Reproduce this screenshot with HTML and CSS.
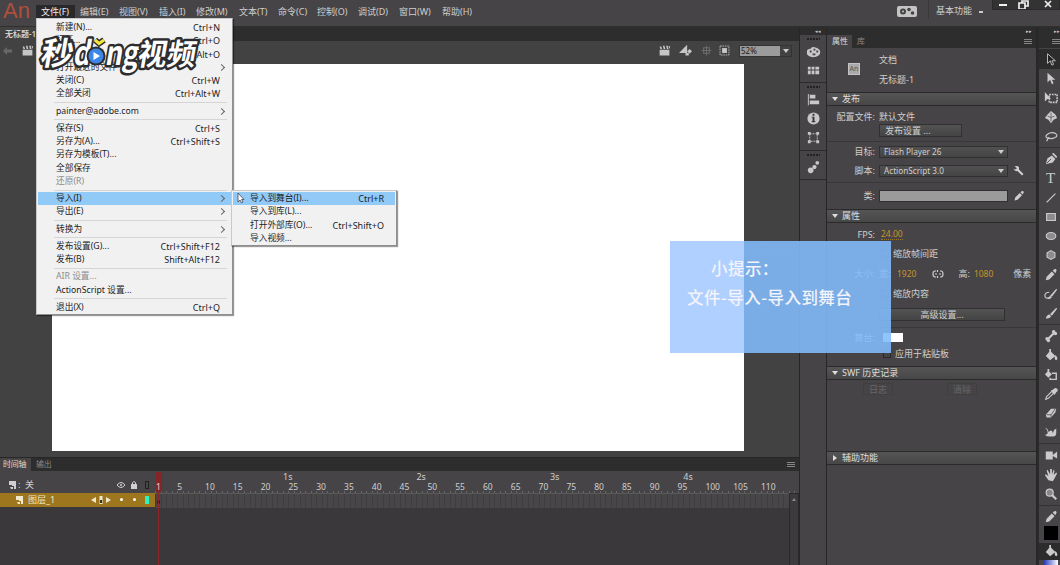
FILE: index.html
```html
<!DOCTYPE html>
<html lang="zh-CN">
<head>
    <meta charset="UTF-8">
    <meta name="viewport" content="width=device-width, initial-scale=1.0">
    <title>无标题-1</title>
    <link rel="stylesheet" href="styles.css">
</head>
<body>
    <svg class="sprite" aria-hidden="true">
        <symbol id="i-clap" viewBox="0 0 16 16"><path d="M2 7h12v7H2zM2 3l2 0 1 3H3zM6 2h2l1 4H7zM10 2h2l1 4h-2zM13 2l2 1-1 3z"/></symbol>
        <symbol id="i-menu" viewBox="0 0 8 6"><path d="M0 0h8v1H0zM0 2h8v1H0zM0 4h8v1H0z"/></symbol>
        <symbol id="i-layer" viewBox="0 0 10 10"><path d="M1 1h7v8H6V6H4V5H1zM2 7h3v2H3z"/></symbol>
        <symbol id="i-pencil" viewBox="0 0 16 16"><path d="M2 14l1-4 6-6 3 3-6 6zM10 3l1.500-1.500q2-1 3 1L13 6z"/></symbol>
        <symbol id="i-bucket" viewBox="0 0 16 16"><path d="M2 9l5-6 6 6-6 5zM6 1h2v6H6zM13 8q4 4 1 6-3-1-1-6z"/></symbol>
        <symbol id="i-dropper" viewBox="0 0 16 16"><path d="M2 14l1-3 6-6 2 2-6 6z" fill="none" stroke="currentColor" stroke-width="1.300"/><path d="M8 4l2-1q3-3 5-1t-1 4l-2 3z"/></symbol>
    </svg>

    <header class="app-bar">
        <div class="brand">An</div>
        <nav class="menu-bar">
            <span class="active">文件(F)</span><span>编辑(E)</span><span>视图(V)</span><span>插入(I)</span><span>修改(M)</span><span>文本(T)</span><span>命令(C)</span><span>控制(O)</span><span>调试(D)</span><span>窗口(W)</span><span>帮助(H)</span>
        </nav>
        <div class="app-right">
            <svg class="sync" viewBox="0 0 20 11"><rect width="20" height="11" rx="2" fill="#c4c4c4"/><g fill="#444"><circle cx="6" cy="5.500" r="3"/><circle cx="12" cy="3.500" r="1.800"/><circle cx="15.500" cy="7" r="1.800"/></g><circle cx="6" cy="5.500" r="1" fill="#c4c4c4"/></svg>
            <div class="workspace-name">基本功能 <i></i></div>
            <div class="window-buttons">
                <svg viewBox="0 0 20 10"><path d="M6 4h8v2H6z"/></svg>
                <svg viewBox="0 0 20 10"><path d="M6 3h6v6H6zM9 3V1h6v5h-3" fill="none" stroke="currentColor" stroke-width="1.700"/></svg>
                <svg class="close" viewBox="0 0 30 10"><path d="M12 1l6 6M18 1l-6 6" fill="none" stroke="currentColor" stroke-width="1.700"/></svg>
            </div>
        </div>
    </header>

    <main class="workspace">
        <section class="document">
            <div class="doc-tabs"><span>无标题-1</span></div>
            <div class="edit-bar">
                <svg class="back" viewBox="0 0 10 8"><path d="M0 4l4-4v2.500h5v3H4V8z"/></svg>
                <svg class="icon scene" ><use href="#i-clap"/></svg>
                <div class="edit-tools">
                    <svg class="icon"><use href="#i-clap"/></svg>
                    <svg class="icon" viewBox="0 0 16 16"><path d="M0 11l10-10v10zM10 9l3-3 3 3-3 3zM8 11h4v3H8z"/></svg>
                    <svg class="icon dim" viewBox="0 0 16 16"><path d="M8 2v12M2 8h12M4.500 4.500h7v7h-7z" fill="none" stroke="currentColor" stroke-width="1.300"/></svg>
                    <svg class="icon" viewBox="0 0 16 16"><path d="M2.500 2.500h11v11h-11z" fill="none" stroke="currentColor" stroke-dasharray="2 1"/><path d="M5 5h6v6H5z"/></svg>
                    <div class="zoom"><span>52%</span><i class="caret"></i></div>
                </div>
            </div>
            <div class="pasteboard"><div class="canvas"></div></div>

            <div class="timeline">
                <div class="tab-strip"><span class="active">时间轴</span><span>输出</span><svg class="panel-menu"><use href="#i-menu"/></svg></div>
                <div class="timeline-body">
                    <div class="layers">
                        <div class="layers-head">
                            <svg class="layer-icon"><use href="#i-layer"/></svg><span class="off">:  关</span>
                            <svg class="eye" viewBox="0 0 10 8"><path d="M1 4q4-5 8 0-4 5-8 0z" fill="none" stroke="currentColor"/><circle cx="5" cy="4" r="1"/></svg>
                            <svg class="lock" viewBox="0 0 8 10"><path d="M1 4h6v5H1z"/><path d="M2.500 4V2.500q1.500-2 3 0V4" fill="none" stroke="currentColor"/></svg>
                            <i class="outline-box"></i>
                        </div>
                        <div class="layer">
                            <svg class="layer-icon"><use href="#i-layer"/></svg><span class="layer-name">图层_1</span>
                            <svg class="key-nav" viewBox="0 0 22 8"><path d="M6 1v6L1 4zM16 1v6l5-3zM9.500 0h3v8h-3z"/><path d="M10 4h2v3h-2z" fill="#332"/></svg>
                            <i class="dot"></i><i class="dot"></i><i class="swatch"></i>
                        </div>
                    </div>
                    <div class="frames">
                        <div class="seconds"><span>1s</span><span>2s</span><span>3s</span><span>4s</span></div>
                        <div class="ruler">
                            <span class="first">1</span><span>5</span><span>10</span><span>15</span><span>20</span><span>25</span><span>30</span><span>35</span><span>40</span><span>45</span><span>50</span><span>55</span><span>60</span><span>65</span><span>70</span><span>75</span><span>80</span><span>85</span><span>90</span><span>95</span><span>100</span><span>105</span><span>110</span>
                        </div>
                        <div class="frame-row"><i></i></div>
                        <div class="playhead"></div>
                        <div class="scrollbar"><i></i></div>
                    </div>
                </div>
            </div>
        </section>

        <aside class="dock">
            <div class="dock-top">◂◂</div>
            <div class="dock-group">
                <i class="grip"></i>
                <svg viewBox="0 0 16 16"><path fill-rule="evenodd" d="M1 8q0-3 4-3 1-3 6-1 5 2 4 6-2 4-8 4-7-1-6-6zM4 7v2h2V7zM8 5v2h2V5zM11 7v2h2V7zM7 10v2h3v-2z"/></svg>
                <svg viewBox="0 0 16 16"><path d="M2 4h3v3H2zM6 4h3v3H6zM10 4h4v3h-4zM2 8h3v4H2zM6 8h3v4H6zM10 8h4v4h-4z"/></svg>
            </div>
            <div class="dock-group">
                <i class="grip"></i>
                <svg viewBox="0 0 16 16"><path d="M2 2h1v12H2zM4 3h6v4H4zM4 9h10v4H4z"/></svg>
                <svg viewBox="0 0 16 16"><circle cx="8" cy="8" r="6.500"/><path d="M7 3h2v2H7zM6 6h3v5h1v1H6v-1h1V7H6z" fill="#333"/></svg>
                <svg viewBox="0 0 16 16"><path d="M4 4h8v8H4z" fill="none" stroke="currentColor" stroke-dasharray="2 1"/><path d="M2 2h3v3H2zM11 2h3v3h-3zM2 11h3v3H2zM11 11h3v3h-3z"/></svg>
            </div>
            <div class="dock-group last">
                <i class="grip"></i>
                <svg viewBox="0 0 16 16"><circle cx="5" cy="11" r="3"/><circle cx="9" cy="7.500" r="2.300"/><circle cx="12" cy="3" r="2"/></svg>
            </div>
        </aside>

        <aside class="properties">
            <div class="panel-top">▸▸</div>
            <div class="tab-strip"><span class="active">属性</span><span>库</span><svg class="panel-menu"><use href="#i-menu"/></svg></div>
            <div class="doc-info">
                <div class="doc-badge">An</div>
                <div class="doc-title"><div>文档</div><div>无标题-1</div></div>
            </div>
            <h2>发布</h2>
            <div class="publish">
                <div class="row profile"><label>配置文件:</label><span>默认文件</span></div>
                <div class="row profile-button"><button>发布设置 ...</button></div>
                <div class="row target"><label>目标:</label><div class="select">Flash Player 26<i class="caret"></i></div></div>
                <div class="row script"><label>脚本:</label><div class="select">ActionScript 3.0<i class="caret"></i></div>
                    <svg class="icon" viewBox="0 0 16 16"><path d="M2 2q4-2 6 1v3l6 6-2 2-6-6q-4 1-5-3l3 1 1-2z"/></svg></div>
                <div class="row class-row"><label>类:</label><div class="field"></div><svg class="icon"><use href="#i-pencil"/></svg></div>
            </div>
            <h2>属性</h2>
            <div class="props">
                <div class="row fps"><label>FPS:</label><span class="value">24.00</span></div>
                <div class="row check"><i></i>缩放帧间距</div>
                <div class="row size"><label>大小:</label><span class="wide">宽:</span><span class="value">1920</span>
                    <svg class="link" viewBox="0 0 12 8"><path d="M4 1H3Q1 1 1 4t2 3h1M8 1h1q2 0 2 3t-2 3H8M3 4h2M7 4h2M5.500 0v2M5.500 6v2" fill="none" stroke="currentColor" stroke-width="1.200"/></svg>
                    <span class="tall">高:</span><span class="value">1080</span><span class="unit">像素</span></div>
                <div class="row check"><i></i>缩放内容</div>
                <div class="row advanced"><button>高级设置...</button></div>
                <div class="row stage"><label>舞台:</label><i></i></div>
                <div class="row apply"><i></i>应用于粘贴板</div>
            </div>
            <h2>SWF 历史记录</h2>
            <div class="history"><span>日志</span><span>清除</span></div>
            <h2 class="closed">辅助功能</h2>
        </aside>

        <aside class="tools">
            <div class="panel-top">▸▸</div>
            <div class="tools-head"><svg class="panel-menu"><use href="#i-menu"/></svg></div>
            <div class="tool-group">
                <span class="selected"><svg viewBox="0 0 16 16"><path d="M4 2v11l3-3 2 5 2-1-2-4h4z" fill="#222" stroke="currentColor"/></svg></span>
                <span><svg viewBox="0 0 16 16"><path d="M4 2v11l3-3 2 5 2-1-2-4h4z"/></svg></span>
                <span><svg viewBox="0 0 16 16"><path d="M1 1v11l3-3h4z"/><path d="M6 4h9v9H6z" fill="none" stroke="currentColor" stroke-width="1.800" stroke-dasharray="2 1"/></svg></span>
                <span><svg viewBox="0 0 16 16"><path d="M8 1l5 4 2 4-4 2-3 4-3-4-4-2 3-4z"/><path d="M4 7q4 3 8 0M8 3v10" fill="none" stroke="#666"/></svg></span>
                <span><svg viewBox="0 0 16 16"><path d="M5 11Q0 9 4 6q4-3 9-1 4 3-1 5-4 2-7 0l-2 4" fill="none" stroke="currentColor" stroke-width="1.400"/></svg></span>
            </div>
            <div class="tool-group">
                <span><svg viewBox="0 0 16 16"><path d="M2 14l2-7 5-3 4 4-3 4zM9 2l2-1 4 4-1 2z"/><path d="M3 13l5-5" stroke="#444"/></svg></span>
                <span class="letter">T</span>
                <span><svg viewBox="0 0 16 16"><path d="M3 13L13 3" stroke="currentColor" stroke-width="1.400"/></svg></span>
                <span><svg viewBox="0 0 16 16"><path d="M3 4h10v8H3z" fill="#8c8c8c" stroke="currentColor" stroke-width="1.300"/></svg></span>
                <span><svg viewBox="0 0 16 16"><ellipse cx="8" cy="8" rx="5.500" ry="4" fill="#8c8c8c" stroke="currentColor" stroke-width="1.300"/></svg></span>
                <span><svg viewBox="0 0 16 16"><path d="M8 3l4.500 2.500v5L8 13l-4.500-2.500v-5z" fill="#8c8c8c" stroke="currentColor" stroke-width="1.300"/></svg></span>
                <span><svg><use href="#i-pencil"/></svg></span>
                <span><svg viewBox="0 0 16 16"><path d="M7 10l7-8 1 1-6 8zM4 13l3-3 2 2-3 2z"/><path d="M6 6q-5 0-5 4t6 2" fill="none" stroke="currentColor" stroke-width="1.300"/></svg></span>
                <span><svg viewBox="0 0 16 16"><path d="M7 9l7-7 1 1-6 8zM2 14q2-5 5-4l1 2q-2 3-6 2z"/></svg></span>
            </div>
            <div class="tool-group">
                <span><svg viewBox="0 0 16 16"><path d="M4 12l8-8" stroke="currentColor" stroke-width="2.500"/><g><circle cx="3.500" cy="11" r="2"/><circle cx="5" cy="13" r="2"/><circle cx="11" cy="3" r="2"/><circle cx="13" cy="5" r="2"/></g></svg></span>
                <span><svg><use href="#i-bucket"/></svg></span>
                <span><svg viewBox="0 0 16 16"><path d="M1 7l4-4 4 4-4 4zM4 1h2v4H4z"/><path d="M9 6h5v7H7v-2" fill="none" stroke="currentColor" stroke-width="1.600"/></svg></span>
                <span><svg><use href="#i-dropper"/></svg></span>
                <span><svg viewBox="0 0 16 16"><path d="M2 10l6-7h6l-1 4-5 6H3z"/><path d="M3 10h5l5-7M8 10v3" fill="none" stroke="#555"/></svg></span>
                <span><svg viewBox="0 0 16 16"><path d="M1 3q4 1 4 5 4-4 5 1 1-4 4-5v5q0 4-4 4-7 1-9-2 4 0 3-4-1-3-3-4z"/></svg></span>
            </div>
            <div class="tool-group">
                <span><svg viewBox="0 0 16 16"><path d="M2 4h8v9H2zM10 8l5-4v8l-5-3z"/></svg></span>
                <span><svg viewBox="0 0 16 16"><path d="M5 14L1 8l1-1 3 2-2-6 1-1 3 5V1h2v6l2-5 1 1-1 5 3-3 1 1-3 6-2 3z"/></svg></span>
                <span><svg viewBox="0 0 16 16"><circle cx="6.500" cy="6.500" r="4" fill="#888" stroke="currentColor" stroke-width="1.400"/><path d="M9 9l5 5" stroke="currentColor" stroke-width="2.500"/></svg></span>
            </div>
            <div class="tool-group colors">
                <span><svg><use href="#i-pencil"/></svg></span>
                <i class="stroke-color"></i>
                <span class="selected"><svg><use href="#i-bucket"/></svg></span>
                <i class="fill-color"></i>
            </div>
        </aside>
    </main>

    <!-- File menu -->
    <div class="popup file-menu">
        <div class="item">新建(N)...<kbd>Ctrl+N</kbd></div>
        <div class="item">打开...<kbd>Ctrl+O</kbd></div>
        <div class="item"><kbd>Ctrl+Alt+O</kbd></div>
        <div class="item sub">打开最近的文件</div>
        <div class="item">关闭(C)<kbd>Ctrl+W</kbd></div>
        <div class="item">全部关闭<kbd>Ctrl+Alt+W</kbd></div>
        <hr>
        <div class="item sub">painter@adobe.com</div>
        <hr>
        <div class="item">保存(S)<kbd>Ctrl+S</kbd></div>
        <div class="item">另存为(A)...<kbd>Ctrl+Shift+S</kbd></div>
        <div class="item">另存为模板(T)...</div>
        <div class="item">全部保存</div>
        <div class="item disabled">还原(R)</div>
        <hr>
        <div class="item sub hover">导入(I)</div>
        <div class="item sub">导出(E)</div>
        <hr>
        <div class="item sub">转换为</div>
        <hr>
        <div class="item">发布设置(G)...<kbd>Ctrl+Shift+F12</kbd></div>
        <div class="item">发布(B)<kbd>Shift+Alt+F12</kbd></div>
        <hr>
        <div class="item disabled">AIR 设置...</div>
        <div class="item">ActionScript 设置...</div>
        <hr>
        <div class="item">退出(X)<kbd>Ctrl+Q</kbd></div>
    </div>

    <div class="popup import-menu">
        <div class="item hover">导入到舞台(I)...<kbd>Ctrl+R</kbd></div>
        <div class="item">导入到库(L)...</div>
        <div class="item">打开外部库(O)...<kbd>Ctrl+Shift+O</kbd></div>
        <div class="item">导入视频...</div>
    </div>
    <svg class="cursor" viewBox="0 0 8 12"><path d="M1 1v9l2-2 1.500 3 1.500-1-1.500-2.500H7z" fill="#fff" stroke="#445" stroke-width=".8"/></svg>

    <svg class="watermark" viewBox="0 0 170 50">
        <g class="logo-text" transform="skewX(-10)">
            <text x="9" y="31" font-size="32">秒</text>
            <text x="42" y="31" font-size="33" textLength="17" lengthAdjust="spacingAndGlyphs">d</text>
            <text x="74" y="31" font-size="33" textLength="33" lengthAdjust="spacingAndGlyphs">ng</text>
            <text x="106" y="31" font-size="30" textLength="58" lengthAdjust="spacingAndGlyphs">视频</text>
        </g>
        <circle cx="60" cy="22" r="9.500" fill="#2d2d2f"/>
        <circle cx="60" cy="22" r="7.500" fill="#3b86e8"/>
        <path d="M57.500 18v8l6.500-4z" fill="#fff"/>
        <path d="M59 6l4 3.500L68 6" fill="none" stroke="#2d2d2f" stroke-width="6"/>
        <path d="M59 6l4 3.500L68 6" fill="none" stroke="#f4e53a" stroke-width="3"/>
    </svg>

    <div class="tip">
        <p>小提示：</p>
        <p>文件-导入-导入到舞台</p>
    </div>
</body>
</html>
```
FILE: styles.css
```css
* {
    box-sizing: border-box;
}
body {
    margin: 0;
    width: 1060px;
    height: 565px;
    overflow: hidden;
    position: relative;
    display: flex;
    flex-direction: column;
    background: #464446;
    color: #cfcfcf;
    font: 9px/12px "Noto Sans", "Noto Sans CJK SC", sans-serif;
}
svg {
    display: block;
    fill: currentColor;
    flex: none;
}
i {
    display: block;
    flex: none;
}
.sprite {
    position: absolute;
    width: 0;
    height: 0;
}
.icon {
    width: 13px;
    height: 13px;
}
.caret {
    border: 3px solid transparent;
    border-top: 4px solid #ccc;
    border-bottom: 0;
}

/* top bar */
.app-bar {
    height: 27px;
    display: flex;
    border-bottom: 1px solid #302f30;
}
.brand {
    width: 36px;
    padding-left: 3px;
    font: 22px/22px "Liberation Sans", sans-serif;
    color: #b04f3d;
}
.menu-bar {
    display: grid;
    grid-template-columns: 39px 39px 40px 37px 43px 39px 39px 41px 41px 43px 40px;
    height: 13px;
    margin-top: 5px;
    line-height: 13px;
    white-space: nowrap;
}
.menu-bar span {
    padding-left: 5px;
}
.menu-bar .active {
    background: #29282a;
    color: #eee;
}
.app-right {
    margin-left: auto;
    display: flex;
}
.sync {
    width: 20px;
    height: 11px;
    margin: 6px 11px 0 0;
}
.workspace-name {
    display: flex;
    width: 64px;
    height: 19px;
    padding: 5px 0 0 7px;
    border-left: 1px solid #3a393a;
    white-space: nowrap;
    justify-content: space-between;
}
.workspace-name i {
    width: 4px;
    height: 2px;
    margin: 6px 9px 0 0;
    background: #ccc;
}
.window-buttons {
    display: flex;
    width: 68px;
    height: 10px;
    background: #343334;
    border: 1px solid #2b2a2b;
    border-top: 0;
    color: #f0f0f0;
    overflow: hidden;
}
.window-buttons svg {
    width: 20px;
    height: 10px;
}
.window-buttons .close {
    width: 30px;
}

.workspace {
    flex: 1;
    display: flex;
    min-height: 0;
}

/* document area */
.document {
    width: 799px;
    display: flex;
    flex-direction: column;
}
.doc-tabs {
    height: 14px;
    background: #2d2d2d;
    font-size: 8px;
    font-weight: 600;
}
.doc-tabs span {
    display: block;
    width: 60px;
    height: 14px;
    line-height: 14px;
    padding-left: 5px;
    background: #434243;
}
.edit-bar {
    height: 23px;
    display: flex;
    align-items: center;
    padding: 0 7px 4px 3px;
    background: #434243;
    color: #c6c6c6;
}
.back {
    width: 10px;
    height: 8px;
    margin-right: 8px;
    color: #686868;
}
.edit-tools {
    margin-left: auto;
    display: flex;
    align-items: center;
    gap: 8px;
}
.edit-tools .dim {
    color: #6c6c6c;
}
.edit-tools .icon:nth-child(4) {
    margin-left: -3px;
}
.zoom {
    display: flex;
    align-items: center;
    width: 53px;
    height: 12px;
    border: 1px solid #333;
}
.zoom span {
    width: 40px;
    height: 10px;
    line-height: 10px;
    padding-left: 1px;
    background: #9b9b9b;
    color: #222;
    font-size: 8px;
    margin-right: 3px;
}
.pasteboard {
    height: 393px;
    padding-left: 52px;
    background: #434243;
}
.canvas {
    width: 692px;
    height: 387px;
    background: #fff;
}

/* timeline */
.tab-strip {
    display: flex;
    height: 13px;
    background: #2d2d2d;
    color: #8b8b8b;
    font-size: 8px;
    line-height: 13px;
}
.tab-strip .active {
    background: #464446;
    color: #ddd;
}
.panel-menu {
    width: 8px;
    height: 6px;
    margin: 4px 4px 0 auto;
    color: #858585;
}
.timeline {
    flex: 1;
    display: flex;
    flex-direction: column;
    border-top: 1px solid #272627;
    background: #3a383a;
    min-height: 0;
}
.timeline .tab-strip {
    line-height: 11px;
}
.timeline .tab-strip span {
    padding: 0 4px 0 3px;
    letter-spacing: -.2px;
}
.timeline .tab-strip .active {
    width: 31px;
}
.timeline .tab-strip span:nth-child(2) {
    padding-left: 5px;
}
.timeline-body {
    flex: 1;
    display: flex;
}
.layers {
    width: 155px;
    flex: none;
}
.layers-head, .layer {
    display: flex;
    align-items: center;
}
.layers-head {
    height: 22px;
    padding: 5px 6px 0 8px;
    background: #464446;
}
.layer-icon {
    width: 10px;
    height: 10px;
}
.off {
    margin-right: auto;
    white-space: pre;
}
.eye {
    width: 10px;
    height: 8px;
    margin-right: 4px;
}
.lock {
    width: 8px;
    height: 10px;
    margin-right: 7px;
}
.outline-box {
    width: 4px;
    height: 8px;
    border: 1px solid #222;
}
.layer {
    height: 14px;
    padding: 0 6px 1px 15px;
    background: #9d761e;
    color: #f1e7cd;
}
.layer .layer-icon {
    margin-right: 3px;
}
.layer-name {
    margin-right: auto;
}
.key-nav {
    width: 22px;
    height: 8px;
    margin-right: 8px;
}
.dot {
    width: 3px;
    height: 3px;
    border-radius: 50%;
    background: #fff;
    margin-right: 10px;
}
.dot + .dot {
    margin-right: 9px;
}
.swatch {
    width: 4px;
    height: 8px;
    background: #2ef2c0;
}
.frames {
    position: relative;
    flex: 1;
    overflow: hidden;
}
.seconds {
    display: flex;
    height: 11px;
    line-height: 11px;
    padding-left: 128px;
    background: #464446;
}
.seconds span {
    width: 133.44px;
    flex: none;
}
.ruler {
    display: flex;
    height: 12px;
    line-height: 9px;
    font-size: 8.5px;
    background: repeating-linear-gradient(90deg, #686768 0 1px, transparent 1px 5.56px) 0 100% / 100% 2px no-repeat #464446;
    border-bottom: 1px solid #5a595a;
}
.ruler span {
    width: 27.8px;
    flex: none;
}
.ruler .first {
    width: 22.24px;
    color: #f3d5d5;
    padding-left: 1px;
    position: relative;
    z-index: 1;
}
.frame-row {
    height: 14px;
    padding: 6px 0 0 2px;
    background: repeating-linear-gradient(90deg, #3f3e3f 0 1px, #484648 1px 5.56px);
}
.frame-row i {
    width: 3px;
    height: 4px;
    border-radius: 50%;
    background: #1f1e1f;
}
/* current frame marker, drawn over the ruler and the frames */
.playhead {
    position: absolute;
    left: 1px;
    top: 1px;
    width: 6px;
    height: 20px;
    background: #842528;
}
.playhead::after {
    content: "";
    position: absolute;
    left: 2px;
    top: 20px;
    width: 1px;
    height: 80px;
    background: #8d2527;
}
.scrollbar {
    position: absolute;
    right: 0;
    top: 22px;
    width: 10px;
    height: 80px;
    background: #3c3a3c;
    border: 1px solid #2b2a2b;
}
.scrollbar i {
    margin: 4px 2px;
    border: 2px solid transparent;
    border-bottom: 3px solid #888;
    border-top: 0;
    width: 0;
}

/* icon dock */
.dock {
    width: 28px;
    border-left: 1px solid #272627;
    border-right: 1px solid #272627;
    color: #c8c8c8;
}
.dock-top, .panel-top {
    height: 8px;
    background: #2d2d2d;
    font-size: 5px;
    line-height: 8px;
    text-align: right;
    padding-right: 5px;
}
.dock-group {
    display: flex;
    flex-direction: column;
    align-items: center;
    height: 48px;
    padding-top: 3px;
    gap: 4px;
    border-bottom: 1px solid #2c2b2c;
}
.dock-group + .dock-group {
    height: 68px;
}
.dock-group + .dock-group.last {
    height: 29px;
}
.dock-group svg {
    width: 15px;
    height: 15px;
}
.grip {
    width: 13px;
    height: 2px;
    background: repeating-linear-gradient(90deg, #222 0 2px, #444 2px 3px);
}

/* properties panel */
.properties {
    width: 210px;
    border-right: 1px solid #272627;
}
.panel-top {
    padding-right: 4px;
}
.properties .tab-strip {
    line-height: 12px;
}
.properties .tab-strip span {
    padding: 0 4px 0 5px;
}
.doc-info {
    display: flex;
    height: 44px;
    padding: 6px 0 0 21px;
    gap: 19px;
}
.doc-badge {
    width: 12px;
    height: 12px;
    margin-top: 9px;
    background: #a9a9a9;
    border: 1px solid #c4c4c4;
    color: #555;
    font-size: 7px;
    line-height: 10px;
    text-align: center;
}
.doc-title {
    display: grid;
    gap: 8px;
    align-content: start;
}
h2 {
    display: flex;
    align-items: center;
    height: 14px;
    margin: 0;
    padding-left: 5px;
    gap: 4px;
    font-size: 9px;
    font-weight: 400;
    color: #dedede;
    border: 1px solid #2b2a2b;
    border-width: 1px 0;
    background: linear-gradient(#565556, #484748);
}
h2::before {
    content: "";
    border: 3px solid transparent;
    border-top: 4px solid #ddd;
    border-bottom: 0;
}
h2.closed::before {
    margin: 0 1px;
    border: 3px solid transparent;
    border-left: 4px solid #ddd;
    border-right: 0;
}
.row {
    display: flex;
    align-items: center;
    white-space: nowrap;
}
.row label {
    width: 48px;
    margin-right: 4px;
    text-align: right;
    flex: none;
}
button {
    height: 13px;
    padding: 0;
    border: 1px solid #323132;
    background: linear-gradient(#545354, #454445);
    color: #cfcfcf;
    font: inherit;
    line-height: 11px;
}
.publish {
    height: 103px;
}
.profile {
    height: 18px;
    padding-top: 4px;
}
.profile-button {
    height: 17px;
    padding-left: 52px;
    align-items: flex-start;
}
.profile-button button {
    width: 83px;
    padding-left: 5px;
    text-align: left;
}
.target, .script {
    height: 20px;
}
.target, .class-row, .stage {
    border-top: 1px solid #393839;
}
.select, .field {
    width: 129px;
    height: 12px;
    border: 1px solid #323132;
}
.select {
    display: flex;
    align-items: center;
    justify-content: space-between;
    padding: 0 3px 0 4px;
    font-size: 8.2px;
    line-height: 10px;
    background: linear-gradient(#525152, #454445);
}
.field {
    background: #9b9b9b;
}
.row .icon {
    width: 12px;
    height: 12px;
    margin-left: 5px;
}
.class-row {
    height: 26px;
    margin-top: 1px;
}
.props {
    height: 143px;
    padding-top: 2px;
}
.value {
    color: #c6952a;
    font-size: 8.5px;
}
.fps {
    height: 19px;
}
.fps .value {
    margin-left: 2px;
    border-bottom: 1px dotted #987527;
    line-height: 10px;
}
.check {
    height: 20px;
    padding-left: 54px;
    gap: 4px;
}
.check i, .apply i {
    width: 8px;
    height: 8px;
    border: 1px solid #2b2a2b;
}
.size {
    height: 20px;
}
.wide {
    width: 14px;
    margin-right: 4px;
}
.link {
    width: 12px;
    height: 8px;
    margin: 0 14px 0 16px;
}
.tall {
    margin-right: 4px;
}
.unit {
    margin-left: 20px;
}
.advanced {
    height: 20px;
    padding-left: 52px;
}
.advanced button {
    width: 126px;
}
.stage {
    height: 20px;
    margin-top: 3px;
}
.stage i {
    width: 20px;
    height: 9px;
    margin-left: 4px;
    background: #fff;
}
.apply {
    height: 13px;
    padding-left: 56px;
    gap: 4px;
}
.history {
    display: flex;
    height: 71px;
    padding: 3px 0 0 36px;
    gap: 54px;
    color: #686768;
}
.history span {
    width: 30px;
    height: 12px;
    line-height: 11px;
    text-align: center;
    border: 1px solid #414041;
}

/* tools */
.tools {
    width: 23px;
    border-left: 2px solid #2b2a2b;
    color: #cacaca;
}
.tools .panel-top {
    padding-right: 0;
}
.tools-head {
    height: 13px;
    background: #2d2d2d;
    overflow: hidden;
}
.tools-head .panel-menu {
    margin-right: 0;
}
.tool-group {
    padding: 1.4px 0;
    border-bottom: 1px solid #343334;
}
.tool-group span {
    display: flex;
    align-items: center;
    justify-content: center;
    height: 19.25px;
    padding-left: 2px;
}
.tool-group svg {
    width: 14px;
    height: 14px;
}
.tool-group .selected {
    background: #2d2c2d;
}
.tool-group .letter {
    font: 15px/19px "Liberation Serif", serif;
}
.stroke-color {
    width: 14px;
    height: 14px;
    margin: -1px 0 3px 5px;
    background: #000;
}
.colors .selected {
    height: 17px;
}
.fill-color {
    width: 14px;
    height: 10px;
    margin-left: 5px;
    background: linear-gradient(90deg, #2739b8, #fff);
}

/* menus that lie over the window */
.popup {
    position: absolute;
    background: #f1f1f2;
    border: 1px solid #c9c9c9;
    border-right-color: #8f8f8f;
    border-bottom-color: #8f8f8f;
    box-shadow: 1px 1px 1px rgba(0, 0, 0, .4);
    color: #1c1c1c;
    font-size: 8.7px;
}
.item {
    display: flex;
    justify-content: space-between;
    align-items: center;
    height: 13.3px;
    line-height: 13px;
    white-space: nowrap;
}
.item kbd {
    margin-left: auto;
    font: inherit;
    font-size: 9px;
}
.item.hover {
    background: #91c9f7;
}
.item.disabled {
    color: #8c8c8c;
}
.item.sub::after {
    content: "";
    width: 4px;
    height: 4px;
    margin-right: -4px;
    border: 1px solid #666;
    border-width: 1px 1px 0 0;
    transform: rotate(45deg);
}
.popup hr {
    height: 1px;
    margin: 1.4px 4px 1.5px 16px;
    border: 0;
    background: #d5d5d5;
}
.file-menu {
    left: 36px;
    top: 18px;
    width: 197px;
    height: 297px;
    padding: 1.8px 1px;
}
.file-menu .item {
    padding: 0 11px 0 18px;
}
.import-menu {
    left: 231px;
    top: 190px;
    width: 166px;
    height: 56px;
    padding: 1px 1px;
}
.import-menu .item {
    padding: 0 11px 0 17px;
}
.cursor {
    position: absolute;
    left: 237px;
    top: 192px;
    width: 8px;
    height: 12px;
}

.watermark {
    position: absolute;
    left: 36px;
    top: 34px;
    width: 170px;
    height: 50px;
}
.logo-text {
    font-family: "Noto Sans CJK SC", sans-serif;
    font-weight: 700;
    fill: #fff;
    stroke: #2d2d2f;
    stroke-width: 5px;
    stroke-linejoin: round;
    paint-order: stroke;
}

/* the tint is denser over the dark panels than over the stage */
.tip {
    position: absolute;
    left: 670px;
    top: 241px;
    width: 221px;
    height: 112px;
    padding: 13px 17px;
    background: linear-gradient(90deg, rgba(145, 190, 255, .72) 74px, rgba(130, 188, 252, .88) 74px);
    color: #f3f3fb;
    font: 500 16.5px/29px "Noto Sans CJK SC", sans-serif;
    letter-spacing: .45px;
}
.tip p {
    margin: 0;
    white-space: nowrap;
}
.tip p:first-child {
    padding-left: 24px;
}
```
